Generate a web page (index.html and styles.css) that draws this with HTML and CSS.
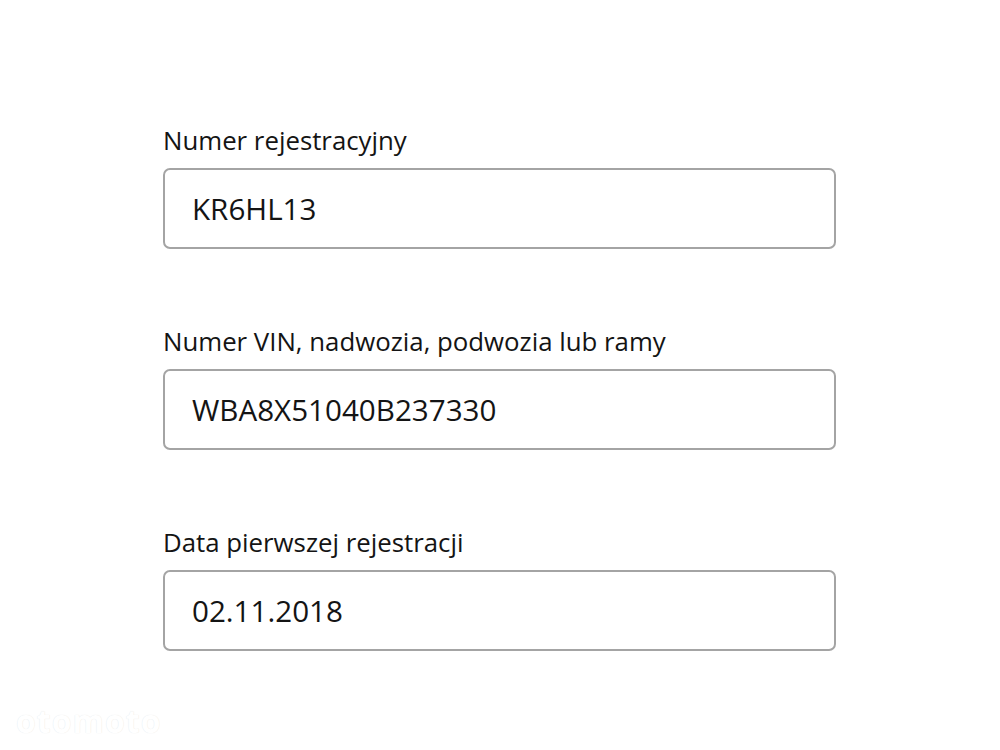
FILE: index.html
```html
<!DOCTYPE html>
<html lang="pl">
<head>
<meta charset="utf-8">
<link rel="stylesheet" href="styles.css">
</head>
<body>
<main class="form">
  <div class="field">
    <div class="label">Numer rejestracyjny</div>
    <div class="box">KR6HL13</div>
  </div>
  <div class="field">
    <div class="label">Numer VIN, nadwozia, podwozia lub ramy</div>
    <div class="box">WBA8X51040B237330</div>
  </div>
  <div class="field">
    <div class="label">Data pierwszej rejestracji</div>
    <div class="box">02.11.2018</div>
  </div>
</main>
<div class="watermark">otomoto</div>
</body>
</html>
```
FILE: styles.css
```css
html, body {
  margin: 0;
  padding: 0;
  background: #ffffff;
}
body {
  width: 1000px;
  height: 750px;
  overflow: hidden;
  position: relative;
  font-family: "Open Sans", "Noto Sans", sans-serif;
  color: #141414;
}
.form {
  padding: 124px 0 0 163px;
  display: flex;
  flex-direction: column;
  gap: 76px;
}
.field {
  display: flex;
  flex-direction: column;
  gap: 12px;
  width: 673px;
}
.label {
  font-size: 25.8px;
  line-height: 32px;
}
.box {
  box-sizing: border-box;
  height: 81px;
  border: 2px solid #a4a4a4;
  border-radius: 7px;
  padding: 0 27px;
  display: flex;
  align-items: center;
  font-size: 29.6px;
}
.watermark {
  position: absolute;
  left: 16px;
  bottom: 8px;
  font-size: 32px;
  font-weight: 700;
  color: #ffffff;
  text-shadow: 0 0 1px rgba(0,0,0,0.12);
  letter-spacing: 1px;
}
```
